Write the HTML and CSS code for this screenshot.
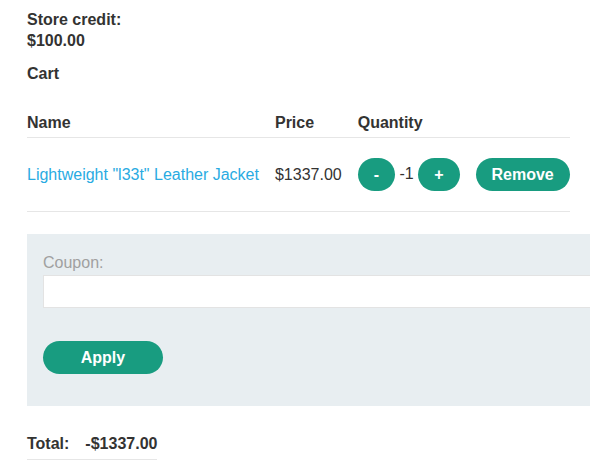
FILE: index.html
```html
<!DOCTYPE html>
<html>
<head>
<meta charset="utf-8">
<link rel="stylesheet" href="styles.css">
</head>
<body>
<div class="page">
  <p class="credit">Store credit:<br>$100.00</p>
  <p class="title">Cart</p>
  <table class="cart">
    <thead>
      <tr><th>Name</th><th>Price</th><th>Quantity</th><th></th></tr>
    </thead>
    <tbody>
      <tr>
        <td><a class="product" href="#">Lightweight "l33t" Leather Jacket</a></td>
        <td>$1337.00</td>
        <td><button class="btn">-</button> <span>-1</span> <button class="btn">+</button></td>
        <td><button class="btn">Remove</button></td>
      </tr>
    </tbody>
  </table>
  <div class="coupon">
    <label class="coupon-label">Coupon:</label>
    <input class="coupon-input" type="text">
    <button class="btn btn-apply">Apply</button>
  </div>
  <table class="total">
    <tr><th>Total:</th><th>-$1337.00</th></tr>
  </table>
</div>
</body>
</html>
```
FILE: styles.css
```css
html, body {
  margin: 0;
  padding: 0;
  background: #ffffff;
}
body {
  font-family: "Liberation Sans", Arial, sans-serif;
  font-size: 16px;
  line-height: 21px;
  color: #333332;
  overflow: hidden;
}
.page {
  padding: 0 0 0 27px;
  overflow: hidden;
}
.credit {
  margin: 9px 0 0;
  font-weight: bold;
}
.title {
  margin: 12px 0 0;
  font-weight: bold;
}
.cart {
  border-collapse: collapse;
  margin-top: 28px;
}
.cart th {
  text-align: left;
  font-weight: bold;
  padding: 0 16px 4px 0;
  border-bottom: 1px solid #e6e6e6;
}
.cart td {
  padding: 20px 16px 20px 0;
  vertical-align: middle;
  border-bottom: 1px solid #e6e6e6;
  white-space: nowrap;
}
.cart th:last-child, .cart td:last-child {
  padding-right: 0;
}
.product {
  color: #29abe2;
  text-decoration: none;
}
.btn {
  display: inline-block;
  vertical-align: middle;
  height: 33px;
  padding: 0 16px;
  border: none;
  border-radius: 17px;
  background: #189c80;
  color: #ffffff;
  font-family: "Liberation Sans", Arial, sans-serif;
  font-size: 16px;
  font-weight: bold;
  line-height: 33px;
  margin: 0;
}
.coupon {
  margin-top: 22px;
  width: 640px;
  background: #e8eef1;
  padding: 18px 16px 32px;
  box-sizing: border-box;
}
.coupon-label {
  display: block;
  color: #a0a0a0;
}
.coupon-input {
  display: block;
  box-sizing: border-box;
  width: 100%;
  height: 33px;
  margin: 2px 0 0;
  border: 1px solid #e3e3e3;
  background: #ffffff;
  padding: 0 8px;
}
.btn-apply {
  margin-top: 33px;
  width: 120px;
}
.total {
  border-collapse: collapse;
  margin-top: 27px;
}
.total th {
  text-align: left;
  font-weight: bold;
  padding: 0 16px 5px 0;
  border-bottom: 1px solid #e6e6e6;
}
.total th:last-child {
  padding-right: 0;
}
```
